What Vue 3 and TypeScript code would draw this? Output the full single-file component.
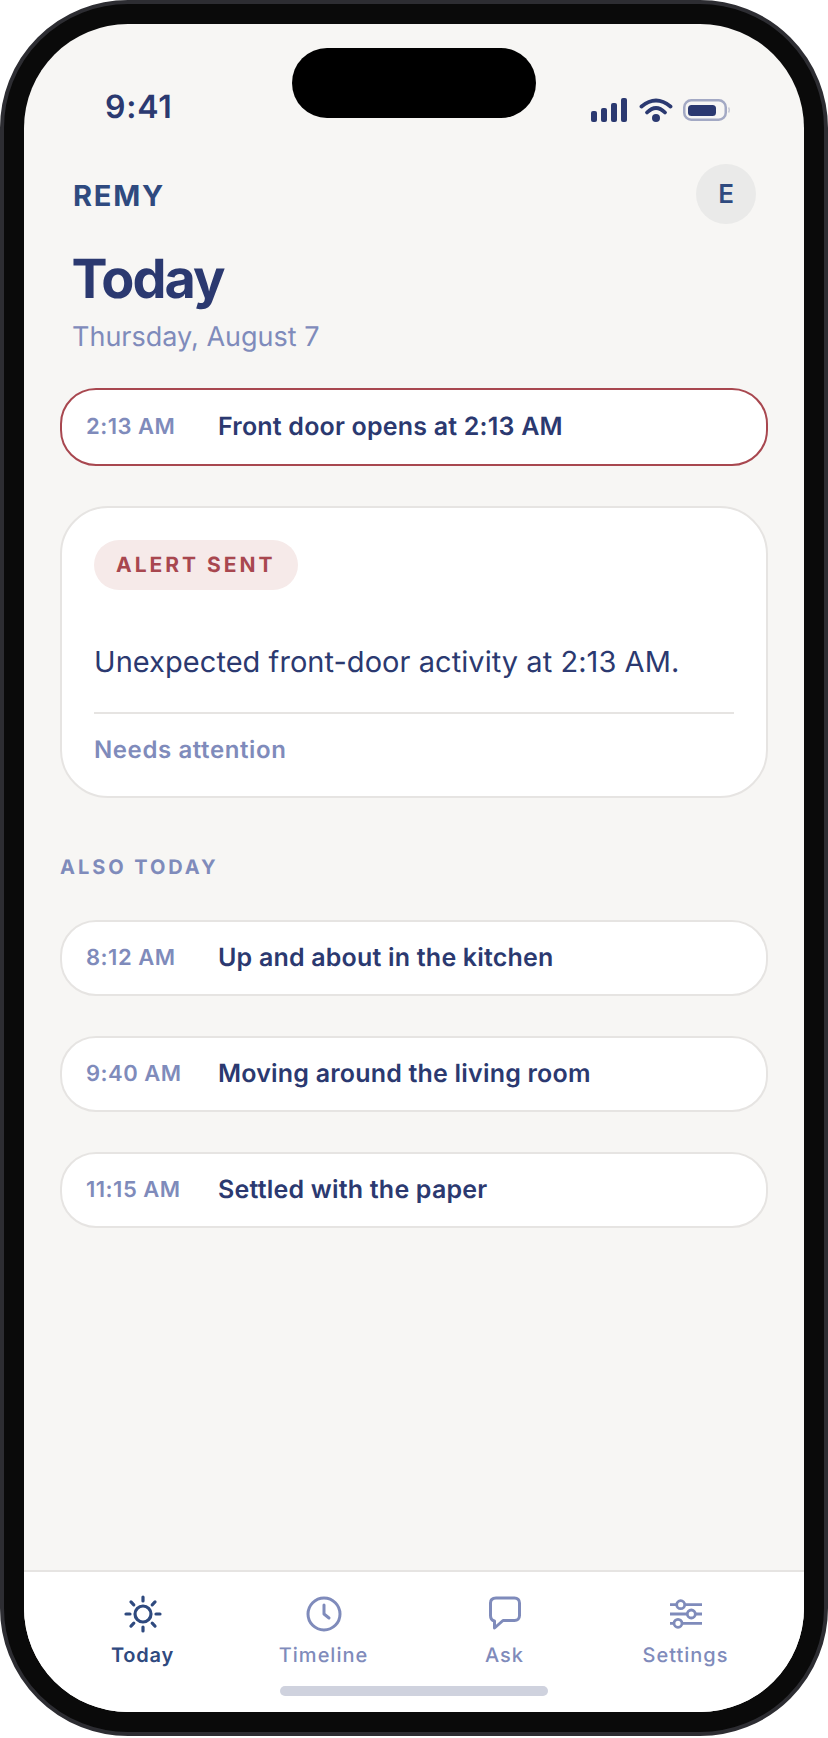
<script setup lang="ts">
interface Moment {
  time: string
  title: string
}

const moments: Moment[] = [
  { time: '8:12 AM', title: 'Up and about in the kitchen' },
  { time: '9:40 AM', title: 'Moving around the living room' },
  { time: '11:15 AM', title: 'Settled with the paper' }
]

const sunRays = [0, 45, 90, 135, 180, 225, 270, 315]
</script>

<template>
  <div class="phone">
    <div class="screen">
      <div class="island"></div>

      <div class="status">
        <span class="clock">9:41</span>
        <div class="status-icons">
          <svg class="bars" width="36" height="24" viewBox="0 0 36 24" fill="#2b3970">
            <rect x="0" y="13" width="6" height="11" rx="2" />
            <rect x="10" y="10" width="6" height="14" rx="2" />
            <rect x="20" y="5" width="6" height="19" rx="2" />
            <rect x="30" y="0" width="6" height="24" rx="2" />
          </svg>
          <svg width="34" height="24" viewBox="0 0 34 24" fill="none" stroke="#2b3970" stroke-width="3.800" stroke-linecap="round">
            <path d="M2.500 8.500Q17 -3.500 31.500 8.500" />
            <path d="M8 14.500Q17 5.500 26 14.500" />
            <circle cx="17" cy="20" r="4" fill="#2b3970" stroke="none" />
          </svg>
          <svg width="47" height="22" viewBox="0 0 47 22" fill="none">
            <rect x="1.250" y="1.250" width="41.500" height="19.500" rx="7" stroke="#a3a9c4" stroke-width="2.500" />
            <rect x="5" y="6" width="28" height="11" rx="3.500" fill="#2b3970" />
            <path d="M45.500 8.500C46.300 9.800 46.300 12.200 45.500 13.500" stroke="#c9cbd6" stroke-width="1.500" />
          </svg>
        </div>
      </div>

      <main class="content">
        <header class="top">
          <span class="brand">REMY</span>
          <span class="avatar">E</span>
        </header>
        <h1 class="title">Today</h1>
        <p class="date">Thursday, August 7</p>

        <div class="row row-alert">
          <span class="row-time">2:13 AM</span>
          <span class="row-title">Front door opens at 2:13 AM</span>
        </div>

        <section class="card">
          <span class="pill">ALERT SENT</span>
          <p class="card-text">Unexpected front-door activity at 2:13 AM.</p>
          <div class="divider"></div>
          <p class="card-foot">Needs attention</p>
        </section>

        <h2 class="section-label">ALSO TODAY</h2>
        <div class="rows">
          <div v-for="m in moments" :key="m.time" class="row">
            <span class="row-time">{{ m.time }}</span>
            <span class="row-title">{{ m.title }}</span>
          </div>
        </div>
      </main>

      <nav class="tabs">
        <div class="tab tab-active">
          <svg width="38" height="38" viewBox="0 0 38 38" fill="none" stroke="currentColor" stroke-width="3.200" stroke-linecap="round">
            <circle cx="19" cy="19" r="8" />
            <line v-for="a in sunRays" :key="a" x1="19" y1="2" x2="19" y2="6" :transform="`rotate(${a} 19 19)`" />
          </svg>
          <span>Today</span>
        </div>
        <div class="tab">
          <svg width="38" height="38" viewBox="0 0 38 38" fill="none" stroke="currentColor" stroke-width="3" stroke-linecap="round" stroke-linejoin="round">
            <circle cx="19" cy="19" r="16" />
            <path d="M19 10V19L24 23" />
          </svg>
          <span>Timeline</span>
        </div>
        <div class="tab">
          <svg width="38" height="38" viewBox="0 0 38 38" fill="none" stroke="currentColor" stroke-width="3" stroke-linecap="round" stroke-linejoin="round">
            <path d="M10 3H28.500C31.500 3 33.500 5 33.500 8V20.500C33.500 23.500 31.500 25.500 28.500 25.500H17L8.500 33V26C6 25.500 4.500 23 4.500 20.500V8C4.500 5 6.500 3 10 3Z" />
          </svg>
          <span>Ask</span>
        </div>
        <div class="tab">
          <svg width="38" height="38" viewBox="0 0 38 38" fill="none" stroke="currentColor" stroke-width="2.800" stroke-linecap="butt">
            <path d="M3 9.700H9.500M18 9.700H35M3 19H20M28.500 19H35M3 28.300H7M15 28.300H35" />
            <circle cx="13.700" cy="9.700" r="4" />
            <circle cx="24.300" cy="19" r="4" />
            <circle cx="11" cy="28.300" r="4" />
          </svg>
          <span>Settings</span>
        </div>
        <div class="home-bar"></div>
      </nav>
    </div>
  </div>
</template>

<style>
html,
body {
  margin: 0;
  background: #fff;
}
</style>

<style scoped>
* {
  box-sizing: border-box;
}

.phone {
  width: 828px;
  height: 1736px;
  padding: 20px;
  background: #0a0a0a;
  border: 4px solid #2d2d32;
  border-radius: 128px;
  box-sizing: border-box;
  font-family: Inter, 'Liberation Sans', sans-serif;
  text-rendering: geometricPrecision;
}

.screen {
  position: relative;
  display: flex;
  flex-direction: column;
  height: 100%;
  overflow: hidden;
  background: #f7f6f4;
  border-radius: 104px;
}

.island {
  position: absolute;
  top: 24px;
  left: 268px;
  width: 244px;
  height: 70px;
  background: #000;
  border-radius: 35px;
}

.status {
  display: flex;
  align-items: center;
  justify-content: space-between;
  height: 116px;
  padding: 50px 74px 0 81px;
  flex-shrink: 0;
}

.clock {
  font-size: 32px;
  line-height: 32px;
  font-weight: 600;
  letter-spacing: 0.8px;
  color: #2b3970;
}

.status-icons {
  display: flex;
  align-items: center;
  gap: 10px;
  margin-top: 6px;
}

.bars {
  margin-right: 2px;
}

.content {
  flex: 1;
  padding: 24px 36px 0;
}

.top {
  display: flex;
  align-items: center;
  justify-content: space-between;
  height: 60px;
  padding: 0 12px 0 13px;
}

.brand {
  margin-top: 2px;
  font-size: 29px;
  font-weight: 700;
  letter-spacing: 1.800px;
  color: #2f4a7f;
}

.avatar {
  display: flex;
  align-items: center;
  justify-content: center;
  width: 60px;
  height: 60px;
  border-radius: 50%;
  background: #eaeae9;
  font-size: 26px;
  font-weight: 600;
  color: #2f4a7f;
}

.title {
  margin: 26px 0 0 11.500px;
  font-size: 54px;
  line-height: 60px;
  font-weight: 700;
  letter-spacing: -2px;
  color: #2b3970;
}

.date {
  margin: 9px 0 0 12px;
  font-size: 27px;
  line-height: 36px;
  color: #7f8bbb;
}

.row {
  display: flex;
  align-items: center;
  height: 76px;
  padding: 0 26px 0 24px;
  background: #fff;
  border: 2px solid #e6e4e2;
  border-radius: 36px;
}

.row-alert {
  height: 78px;
  margin-top: 33px;
  border-color: #a8474f;
}

.row-time {
  width: 132px;
  flex-shrink: 0;
  font-size: 22px;
  font-weight: 600;
  font-kerning: none;
  letter-spacing: 0.5px;
  color: #7f8bbb;
}

.row-title {
  font-size: 25px;
  font-weight: 600;
  letter-spacing: 0.2px;
  color: #2b3970;
}

.card {
  margin-top: 40px;
  padding: 32px 32px 30px;
  background: #fff;
  border: 2px solid #e6e4e2;
  border-radius: 48px;
}

.pill {
  display: inline-flex;
  align-items: center;
  height: 50px;
  padding: 0 22px;
  border-radius: 25px;
  background: #f6eae9;
  font-size: 21px;
  font-weight: 700;
  letter-spacing: 3px;
  color: #a8474f;
}

.card-text {
  margin: 52px 0 0;
  font-size: 29px;
  line-height: 40px;
  letter-spacing: 0.05px;
  color: #2b3970;
}

.divider {
  height: 2px;
  margin: 30px 0 20px;
  background: #e6e4e2;
}

.card-foot {
  margin: 0;
  font-size: 24px;
  line-height: 32px;
  font-weight: 600;
  letter-spacing: 0.6px;
  color: #7f8bbb;
}

.section-label {
  margin: 56px 0 0;
  font-size: 20px;
  line-height: 26px;
  font-weight: 700;
  letter-spacing: 2.950px;
  color: #7f8bbb;
}

.rows {
  display: flex;
  flex-direction: column;
  gap: 40px;
  margin-top: 40px;
}

.tabs {
  position: relative;
  display: grid;
  grid-template-columns: repeat(4, 1fr);
  height: 142px;
  padding: 23px 28px 0;
  flex-shrink: 0;
  background: #fff;
  border-top: 2px solid #e6e4e2;
}

.tab {
  display: flex;
  flex-direction: column;
  align-items: center;
  gap: 9px;
  font-size: 20px;
  line-height: 26px;
  font-weight: 500;
  letter-spacing: 1px;
  color: #7f8bbb;
}

.tab-active {
  font-weight: 600;
  letter-spacing: 0.8px;
  color: #2f4a7f;
}

.home-bar {
  position: absolute;
  left: 256px;
  bottom: 16px;
  width: 268px;
  height: 10px;
  border-radius: 5px;
  background: #cfd2de;
}
</style>
